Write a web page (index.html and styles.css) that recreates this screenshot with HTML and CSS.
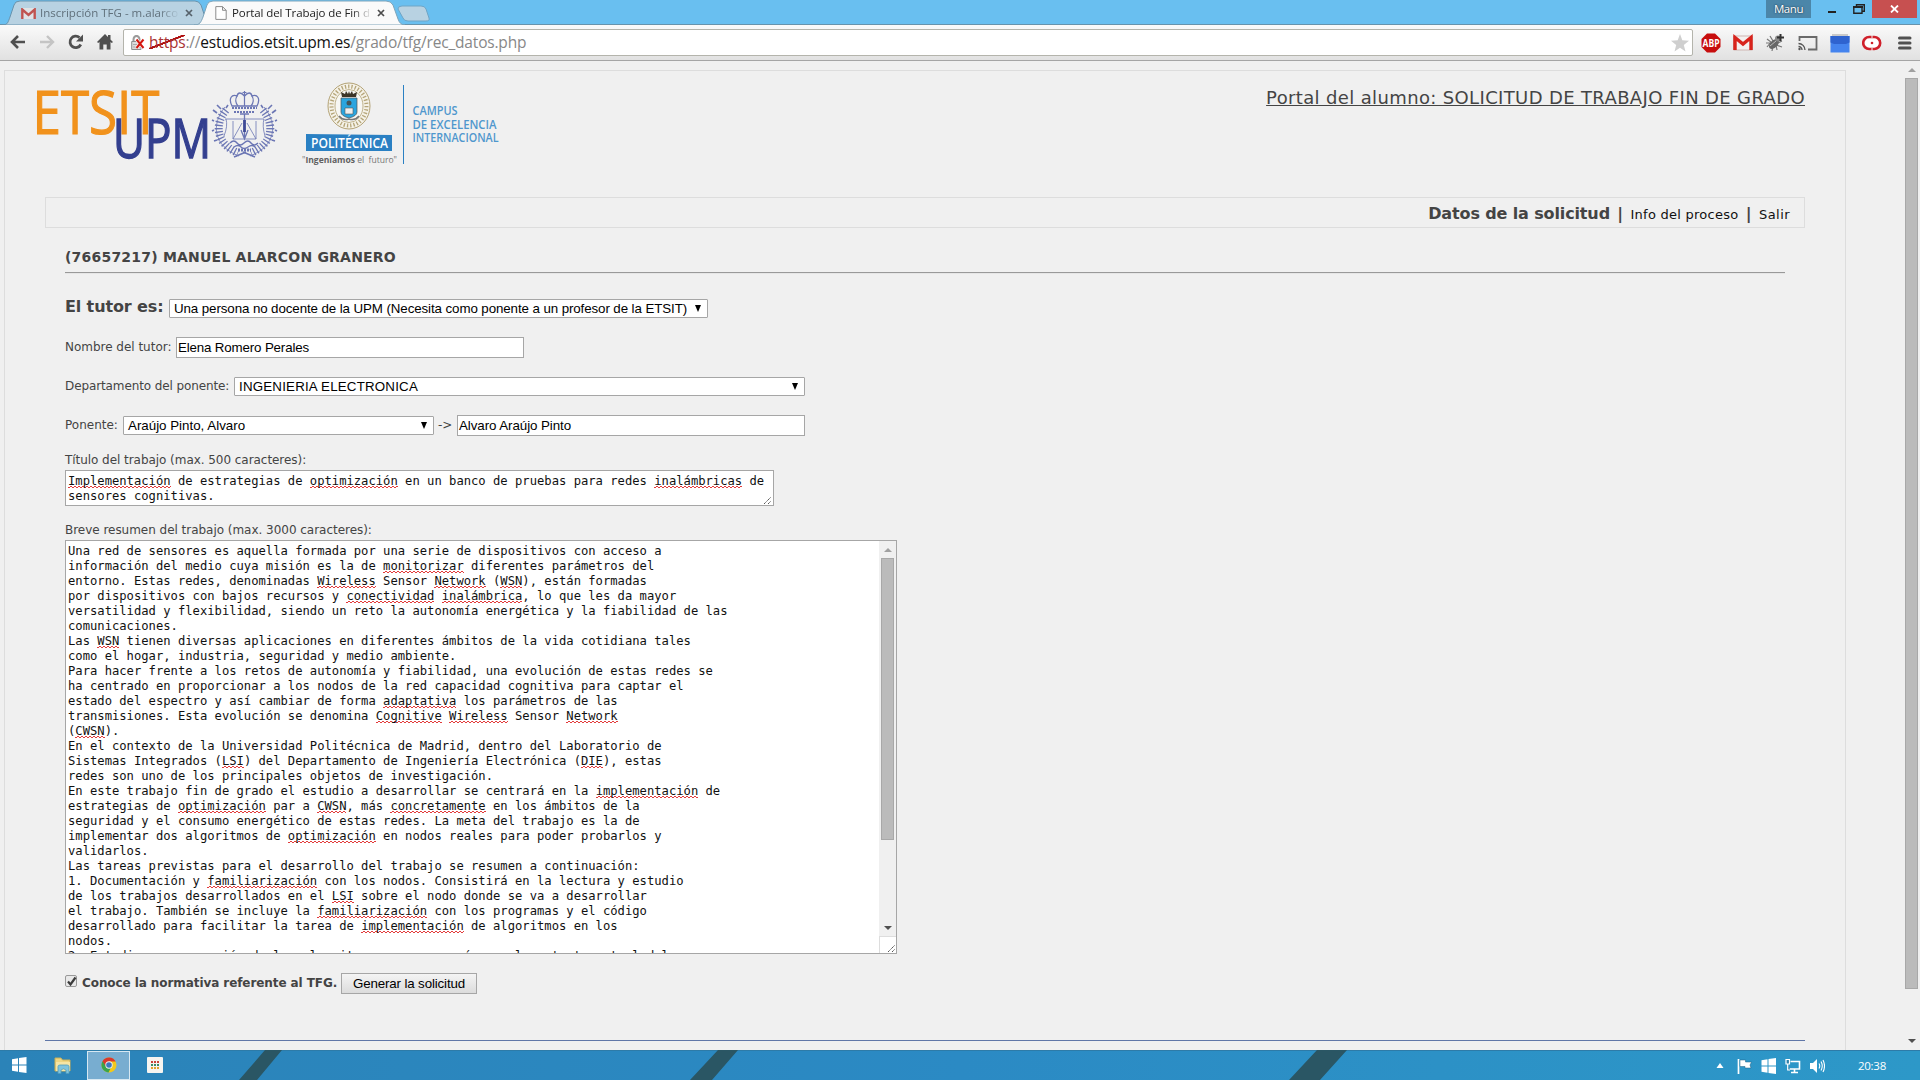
FILE: index.html
```html
<!DOCTYPE html>
<html lang="es">
<head>
<meta charset="utf-8">
<title>Portal del Trabajo de Fin de Grado</title>
<link rel="stylesheet" href="styles.css">
</head>
<body>
<header class="tabstrip">
  <svg class="tabshapes" width="440" height="25" viewBox="0 0 440 25">
    <path d="M2 25C8 25 8 22 10 17L14 5Q15 1 20 1H195Q199 1 201 5L206 20Q207 24 211 25Z" fill="#b8d2e2" stroke="#6893ad"/>
    <path d="M398 9Q398 6 402 6H421Q425 6 426 9L429 18Q430 21 426 21H408Q404 21 403 18Z" fill="#b8d2e2" stroke="#6fa5c6"/>
    <path d="M194 25C200 25 201 22 203 17L207 5Q208 1 213 1H386Q391 1 393 5L398 19Q400 25 405 25Z" fill="#fafafa" stroke="#7ea4ba"/>
  </svg>
  <div class="tab tab1">
    <svg width="15" height="11" viewBox="0 0 15 11"><path d="M0 0H15V11H0Z" fill="#dfe3e6"/><path d="M1.3 11V1.5L7.5 7L13.7 1.5V11" fill="none" stroke="#bf5451" stroke-width="2.4"/></svg>
    <span class="tabtitle">Inscripción TFG - m.alarco</span>
    <svg class="x" width="8" height="8" viewBox="0 0 8 8"><path d="M1 1L7 7M7 1L1 7" stroke="#56626b" stroke-width="1.7"/></svg>
  </div>
  <div class="tab tab2">
    <svg width="12" height="14" viewBox="0 0 12 14"><path d="M.8.6H7.5L11.2 4.3V13.4H.8ZM7.5.6V4.3H11.2" fill="#fff" stroke="#8c8c8c"/></svg>
    <span class="tabtitle">Portal del Trabajo de Fin d</span>
    <svg class="x" width="8" height="8" viewBox="0 0 8 8"><path d="M1 1L7 7M7 1L1 7" stroke="#4c4c4c" stroke-width="1.7"/></svg>
  </div>
  <div class="winctl">
    <span class="user">Manu</span>
    <svg width="61" height="18" viewBox="0 0 61 18"><path d="M17 11H25V13H17Z" fill="#222"/><path d="M42.8 7H51V13.2H42.8ZM45.5 7V4.7H53.3V11.3H51" fill="none" stroke="#222" stroke-width="1.4"/><path d="M42 6H52V8H42Z" fill="#222"/></svg>
    <span class="close"><svg width="9" height="8" viewBox="0 0 9 8"><path d="M1 .5L8 7.5M8 .5L1 7.5" stroke="#fff" stroke-width="1.8"/></svg></span>
  </div>
</header>
<nav class="toolbar">
  <div class="nav">
    <svg width="16" height="16" viewBox="0 0 16 16"><path d="M15 8H2M8 2L2 8L8 14" fill="none" stroke="#505050" stroke-width="2.6"/></svg>
    <svg width="16" height="16" viewBox="0 0 16 16"><path d="M1 8H14M8 2L14 8L8 14" fill="none" stroke="#c4c4c4" stroke-width="2.4"/></svg>
    <svg width="16" height="16" viewBox="0 0 16 16"><path d="M12.8 10.5A5.7 5.7 0 1 1 11.5 3.6" fill="none" stroke="#505050" stroke-width="2.8"/><path d="M15 .5V7.5H8Z" fill="#505050"/></svg>
    <svg width="16" height="16" viewBox="0 0 16 16"><path d="M8 0L11 3V1H13.5V5.4L16 8L14.8 9L13.5 8V15.5H9.7V10.5H6.3V15.5H2.5V8L1.2 9L0 8Z" fill="#505050"/></svg>
  </div>
  <div class="omnibox">
    <svg width="16" height="16" viewBox="0 0 16 16"><path d="M2.500 7V4.500A3 3.600 0 0 1 8.500 4.500V7" fill="none" stroke="#9b9b9b" stroke-width="2"/><path d="M.7 6.500H10V14.500H.7Z" fill="#dcdcdc" stroke="#8d8d8d"/><path d="M2 9.500H9M2 12H9" stroke="#aaa"/><path d="M5.500 4.500L12.500 13M12.500 4.500L5.500 13" stroke="#fff" stroke-width="3.400"/><path d="M5.500 4.500L12.500 13M12.500 4.500L5.500 13" stroke="#d3170f" stroke-width="2"/></svg>
    <span class="url"><span class="bad">https</span>://<span class="host">estudios.etsit.upm.es</span>/grado/tfg/rec_datos.php</span>
    <svg class="star" width="18" height="18" viewBox="0 0 18 18"><path d="M9 0L11.3 6.3L18 6.700L12.800 11L14.500 17.500L9 13.800L3.500 17.500L5.200 11L0 6.700L6.700 6.300Z" fill="#cfcfcf"/></svg>
  </div>
  <div class="ext">
    <svg width="20" height="20" viewBox="0 0 20 20"><path d="M6 .5H14L19.500 6V14L14 19.500H6L.5 14V6Z" fill="#c70d0d"/><text x="10" y="13.500" font-size="10" font-weight="700" text-anchor="middle" textLength="17" lengthAdjust="spacingAndGlyphs" fill="#fff">ABP</text></svg>
    <svg width="20" height="20" viewBox="0 0 20 20"><path d="M.5 3H19.500V17H.5Z" fill="#f4f0ef" stroke="#cfb5b2"/><path d="M2 17V4.500L10 11L18 4.500V17" fill="none" stroke="#d8231c" stroke-width="3.400"/></svg>
    <svg width="20" height="20" viewBox="0 0 20 20"><path d="M2 6L6 9L2 14M5 3L8 8M7 18L8 13M12 17L11 12L17 14M1 10H6M13 10L17 8" fill="none" stroke="#777" stroke-width="1.200"/><ellipse cx="9" cy="11" rx="3.600" ry="6" transform="rotate(45 9 11)" fill="#676767"/><path d="M5 13L11 8" stroke="#bbb"/><circle cx="13" cy="5.500" r="3" fill="#8a8a8a"/><path d="M15.500 1V8M12 4.500H19" stroke="#333" stroke-width="2"/></svg>
    <svg width="20" height="20" viewBox="0 0 20 20"><path d="M1.500 8V4H18.500V16.500H10" fill="none" stroke="#6a6a6a" stroke-width="1.800"/><path d="M.5 10.500A6.500 6.500 0 0 1 7 17M.5 13.500A3.500 3.500 0 0 1 4 17" fill="none" stroke="#555" stroke-width="1.300"/><circle cx="1.500" cy="16" r="1.200" fill="#555"/></svg>
    <svg width="20" height="20" viewBox="0 0 20 20"><path d="M2 1H18V4H2Z" fill="#c9c9c9"/><path d="M.5 3H19.500V19.500H.5Z" fill="#4584ee"/><path d="M.5 3H19.500V9.500L16 11H4L.5 9.500Z" fill="#2f63cf"/></svg>
    <svg width="20" height="20" viewBox="0 0 20 20"><rect x="1.200" y="4" width="17" height="12" rx="6" fill="#fff" stroke="#d0202b" stroke-width="2.600"/><path d="M10 2V5M10 15V18" stroke="#f0eeee" stroke-width="1"/><circle cx="10" cy="10" r="1.300" fill="#d0202b"/></svg>
    <svg width="20" height="20" viewBox="0 0 20 20"><path d="M5.500 5H16M5.500 10H16M5.500 15H16" stroke="#505050" stroke-width="3" stroke-linecap="round"/></svg>
  </div>
</nav>
<main class="viewport">
  <div class="frame">
    <div class="head">
      <svg class="logos" width="480" height="90" viewBox="30 76 480 90">
        <text class="etsit" x="32.500" y="134" textLength="127" lengthAdjust="spacingAndGlyphs" font-size="60.500">ETSIT</text>
        <text class="upm" x="113" y="157.500" textLength="98" lengthAdjust="spacingAndGlyphs" font-size="54.500">UPM</text>
        <g fill="none" stroke="#6b76b4">
          <path d="M226 110C214 124 216 144 238 153" stroke-width="8" stroke-dasharray="1.300 2"/>
          <path d="M263 110C275 124 273 144 251 153" stroke-width="8" stroke-dasharray="1.300 2"/>
          <path d="M225 107C211 124 213 146 239 156M264 107C278 124 276 146 250 156" stroke-width=".8"/>
          <path d="M217 113l-4 -3M221 109l-4 -4M226 108l2 -3M272 113l4 -3M268 109l4 -4M263 108l-2 -3M214 121l-2 -1M275 121l2 -1M214 130l-2 1M275 130l2 1M217 140l-3 1M272 140l3 1M234 157l12 -5M255 157l-12 -5" stroke-width="1.600"/>
          <path d="M232 106C228 98 232 94 237 96C238 92 241 92 244.500 96C248 92 251 92 252 96C257 94 261 98 257 106Z" stroke-width="1.300"/>
          <path d="M237 96Q234 101 238 106M252 96Q255 101 251 106M244.500 94V106M244.500 91V95M242.500 92.500H246.500" stroke-width="1.200"/>
          <path d="M232 108H257M234 112H255" stroke-width="2.200" stroke-dasharray="2 1"/>
          <path d="M225 119H264M233 121V139H256V121M233 139L242 123M256 139L247 123M226 119Q228 126 224 136M264 119Q262 126 265 136" stroke-width=".8"/>
          <path d="M240 114H249M244.500 114V139M241 130L244.500 139L248 130M230 143q4 -4 7 0t7 0t7 0t7 0M234 147q4 -3 7 0t7 0t7 0" stroke-width="1.300"/>
          <path d="M244.500 120V132" stroke="#3f4a97" stroke-width="2.800"/>
          <path d="M238 150H251" stroke-width="3" stroke-dasharray="2 1"/>
        </g>
        <ellipse cx="349" cy="106" rx="21" ry="23" fill="#f5f2e8" stroke="#b3a275"/>
        <ellipse cx="349" cy="106" rx="17.500" ry="19.500" fill="none" stroke="#b5a578" stroke-width="4" stroke-dasharray="1.300 2"/>
        <ellipse cx="349" cy="106" rx="14" ry="16.500" fill="#f7f7f3" stroke="#b3a275" stroke-width=".8"/>
        <path d="M342 97L341 92L345 94L346 91L348 94L349 91L350 94L352 91L353 94L357 92L356 97Z" fill="#3b3426"/>
        <path d="M341 98H357V112Q357 116 349 118Q341 116 341 112Z" fill="#2aa5df" stroke="#555" stroke-width=".7"/>
        <circle cx="349" cy="103" r="2.500" fill="#45555b"/><path d="M345 108H353V114H345Z" fill="#eee" stroke="#555" stroke-width=".6"/>
        <path d="M339 116Q343 121 349 119Q355 121 359 116" fill="none" stroke="#777" stroke-width="1.500"/>
        <path d="M306 134L392 135V151H306Z" fill="#2a80c3"/>
        <text class="pol" x="311" y="147.500" textLength="77" lengthAdjust="spacingAndGlyphs" font-size="15" fill="#fff">POLITÉCNICA</text>
        <text class="tag" x="302" y="163" textLength="95" lengthAdjust="spacingAndGlyphs" font-size="9.500" fill="#777"><tspan>"</tspan><tspan font-weight="700" fill="#606060">Ingeniamos</tspan> el&#160; futuro"</text>
        <path d="M403.500 85V164" stroke="#2a80c3"/>
        <g class="cei" fill="#4f97cd" font-size="12.500">
          <text x="412.500" y="115" textLength="45" lengthAdjust="spacingAndGlyphs">CAMPUS</text>
          <text x="412.500" y="129" textLength="84" lengthAdjust="spacingAndGlyphs">DE EXCELENCIA</text>
          <text x="412.500" y="142" textLength="86" lengthAdjust="spacingAndGlyphs">INTERNACIONAL</text>
        </g>
      </svg>
      <h1>Portal del alumno: SOLICITUD DE TRABAJO FIN DE GRADO</h1>
    </div>
    <div class="menubar">
      <b class="cur">Datos de la solicitud</b><b class="bar">|</b><span class="lnk">Info del proceso</span><b class="bar">|</b><span class="lnk out">Salir</span>
    </div>
    <section class="form">
      <h2>(76657217) MANUEL ALARCON GRANERO</h2>
      <hr>
      <div class="row r1"><b class="big">El tutor es:</b><span class="select s1"><span>Una persona no docente de la UPM (Necesita como ponente a un profesor de la ETSIT)</span><i></i></span></div>
      <div class="row r2"><span class="lb">Nombre del tutor:</span><span class="input tutor">Elena Romero Perales</span></div>
      <div class="row r3"><span class="lb">Departamento del ponente:</span><span class="select s3"><span>INGENIERIA ELECTRONICA</span><i></i></span></div>
      <div class="row r4"><span class="lb">Ponente:</span><span class="select s4"><span>Araújo Pinto, Alvaro</span><i></i></span><span class="lb arrow">-&gt;</span><span class="input">Alvaro Araújo Pinto</span></div>
      <div class="cap">Título del trabajo (max. 500 caracteres):</div>
      <div class="area a1"><pre><u>Implementación</u> de estrategias de <u>optimización</u> en un banco de pruebas para redes <u>inalámbricas</u> de
sensores cognitivas.</pre><svg class="grip" width="9" height="9" viewBox="0 0 9 9"><path d="M1 8L8 1M5 8L8 5" stroke="#555" stroke-dasharray="1.400 .5"/></svg></div>
      <div class="cap c2">Breve resumen del trabajo (max. 3000 caracteres):</div>
      <div class="area a2"><pre>Una red de sensores es aquella formada por una serie de dispositivos con acceso a
información del medio cuya misión es la de <u>monitorizar</u> diferentes parámetros del
entorno. Estas redes, denominadas <u>Wireless</u> Sensor <u>Network</u> (<u>WSN</u>), están formadas
por dispositivos con bajos recursos y <u>conectividad</u> <u>inalámbrica</u>, lo que les da mayor
versatilidad y flexibilidad, siendo un reto la autonomía energética y la fiabilidad de las
comunicaciones.
Las <u>WSN</u> tienen diversas aplicaciones en diferentes ámbitos de la vida cotidiana tales
como el hogar, industria, seguridad y medio ambiente.
Para hacer frente a los retos de autonomía y fiabilidad, una evolución de estas redes se
ha centrado en proporcionar a los nodos de la red capacidad cognitiva para captar el
estado del espectro y así cambiar de forma <u>adaptativa</u> los parámetros de las
transmisiones. Esta evolución se denomina <u>Cognitive</u> <u>Wireless</u> Sensor <u>Network</u>
(<u>CWSN</u>).
En el contexto de la Universidad Politécnica de Madrid, dentro del Laboratorio de
Sistemas Integrados (<u>LSI</u>) del Departamento de Ingeniería Electrónica (<u>DIE</u>), estas
redes son uno de los principales objetos de investigación.
En este trabajo fin de grado el estudio a desarrollar se centrará en la <u>implementación</u> de
estrategias de <u>optimización</u> par a <u>CWSN</u>, más <u>concretamente</u> en los ámbitos de la
seguridad y el consumo energético de estas redes. La meta del trabajo es la de
implementar dos algoritmos de <u>optimización</u> en nodos reales para poder probarlos y
validarlos.
Las tareas previstas para el desarrollo del trabajo se resumen a continuación:
1. Documentación y <u>familiarización</u> con los nodos. Consistirá en la lectura y estudio
de los trabajos desarrollados en el <u>LSI</u> sobre el nodo donde se va a desarrollar
el trabajo. También se incluye la <u>familiarización</u> con los programas y el código
desarrollado para facilitar la tarea de <u>implementación</u> de algoritmos en los
nodos.
2. Estudio y comparación de los algoritmos que se usarán en el contexto actual del</pre>
        <div class="sb"><i class="up"></i><i class="thumb"></i><i class="down"></i><div class="corner"><svg width="9" height="9" viewBox="0 0 9 9"><path d="M1 8L8 1M5 8L8 5" stroke="#555" stroke-dasharray="1.400 .5"/></svg></div></div>
      </div>
      <div class="row r5"><span class="check"><svg width="11" height="11" viewBox="0 0 11 11"><path d="M2 5.500L4.500 8.500L9.500 1.500" fill="none" stroke="#3c3c3c" stroke-width="2.200"/></svg></span><b class="agree">Conoce la normativa referente al TFG.</b><span class="btn">Generar la solicitud</span></div>
    </section>
    <div class="rule"></div>
  </div>
  <div class="mainsb"><i class="up"></i><i class="thumb"></i><i class="down"></i></div>
</main>
<footer class="taskbar">
  <svg class="streaks" width="1920" height="30" viewBox="0 0 1920 30"><path d="M265 0H282L257 30H239ZM718 0H738L712 30H690ZM1317 0H1347L1320 30H1289Z" fill="#2a5664"/></svg>
  <svg class="win" width="15" height="16" viewBox="0 0 15 16"><path d="M0 2.200L6 1.300V7.500H0ZM7 1.100L14.500 0V7.500H7ZM0 8.500H6V14.700L0 13.800ZM7 8.500H14.500V16L7 14.900Z" fill="#fff"/></svg>
  <svg class="exp" width="18" height="17" viewBox="0 0 18 17"><path d="M1 1H7L8.500 3H16V14H1Z" fill="#efd682" stroke="#c9ae57"/><path d="M2 5H16V14H2Z" fill="#f5e5a5"/><path d="M4 16.500V9.500Q4 8 6 8H13Q15 8 15 9.500V16.500H12V13Q9.500 10.500 7 13V16.500Z" fill="#7fc4de" stroke="#4e9cbd" stroke-width=".8"/></svg>
  <span class="active"><svg width="16" height="16" viewBox="0 0 16 16"><circle cx="8" cy="8" r="7.500" fill="#f2c81c"/><path d="M8 8L1.500 4.200A7.500 7.500 0 0 0 7.500 15.500L10.500 9.500Z" fill="#3aa44b"/><path d="M8 8V4.600H14.700A7.500 7.500 0 0 0 1.500 4.200L5 9.500Z" fill="#d9392d"/><circle cx="8" cy="8" r="3.700" fill="#eee"/><circle cx="8" cy="8" r="2.800" fill="#3d78bd"/></svg></span>
  <svg class="apps" width="16" height="16" viewBox="0 0 16 16"><rect width="16" height="16" rx="1" fill="#f6f4f0"/><path d="M4 5H12" stroke="#c9423a" stroke-width="2" stroke-dasharray="2 1"/><path d="M4 8H12" stroke="#3b8a6a" stroke-width="2" stroke-dasharray="2 1"/><path d="M4 11H12" stroke="#e0a32e" stroke-width="2" stroke-dasharray="2 1"/></svg>
  <div class="tray">
    <svg class="more" width="8" height="6" viewBox="0 0 8 6"><path d="M4 0L7.500 5H.5Z" fill="#fff"/></svg>
    <svg width="16" height="16" viewBox="0 0 16 16"><path d="M1.500 1V16" stroke="#fff" stroke-width="1.700"/><path d="M3 2H8.500V4H14.500L13 7L14 10H8V8.500H3Z" fill="#fff" stroke="#1d5f83" stroke-width=".5"/></svg>
    <svg width="16" height="16" viewBox="0 0 15 16"><path d="M0 2.200L6 1.300V7.500H0ZM7 1.100L14.500 0V7.500H7ZM0 8.500H6V14.700L0 13.800ZM7 8.500H14.500V16L7 14.900Z" fill="#fff"/></svg>
    <svg width="16" height="16" viewBox="0 0 16 16"><path d="M5.500 3.500H14.500V11H4.500M9.500 11V14.500M6 14.500H13" fill="none" stroke="#fff" stroke-width="1.600"/><path d="M1 1.500H4.500V6H1ZM2.700 6V12H5" fill="#2b80ac" stroke="#fff" stroke-width="1.200"/></svg>
    <svg width="16" height="16" viewBox="0 0 16 16"><path d="M1 5H4L8 1V15L4 11H1Z" fill="#fff"/><path d="M10 5.500Q11.500 8 10 10.500M12 3.500Q14.500 8 12 12.500M14 2Q17 8 14 14" fill="none" stroke="#fff" stroke-width="1.100"/></svg>
    <span class="clock">20:38</span>
  </div>
</footer>
</body>
</html>
```
FILE: styles.css
```css
* { box-sizing: border-box; }
body { margin: 0; width: 1920px; height: 1080px; overflow: hidden; background: #f0f0f0; display: flex; flex-direction: column; font-family: "DejaVu Sans", sans-serif; color: #444; }
svg { display: block; flex: none; }
i { font-style: normal; display: block; }
span, b { white-space: nowrap; }

.tabstrip { position: relative; height: 25px; background: #69bff0; display: flex; flex: none; font: 11.5px/16px "Open Sans", sans-serif; border-bottom: 1px solid #6793ac; }
.tabshapes { position: absolute; left: 0; top: 0; }
.tab { position: relative; display: flex; align-items: center; height: 26px; }
.tab1 { margin-left: 21px; width: 194px; color: #60707b; }
.tab2 { width: 192px; color: #222; }
.tabtitle { margin-left: 4px; width: 140px; overflow: hidden; mask-image: linear-gradient(90deg, #000 85%, transparent); }
.tab2 .tabtitle { margin-left: 5px; width: 140px; letter-spacing: -.09px; }
.tab .x { margin-left: 5px; }
.winctl { margin-left: auto; margin-right: 3px; display: flex; height: 18px; }
.user { width: 45px; background: #4b86a9; color: #fff; text-align: center; font-size: 11.5px; line-height: 17px; letter-spacing: -.4px; text-shadow: 0 0 2px #123; }
.close { width: 45px; background: #c75050; display: flex; align-items: center; justify-content: center; }

.toolbar { height: 36px; flex: none; display: flex; align-items: center; background: linear-gradient(#fafafa, #e1e1e1); border-bottom: 1px solid #a5a5a5; padding-left: 10px; }
.nav { display: flex; gap: 13px; width: 113px; }
.nav svg { margin-top: -1px; }
.omnibox { width: 1570px; height: 27px; border: 1px solid #b4b4ac; border-radius: 2px; background: #fff; display: flex; align-items: center; padding-left: 7px; }
.url { margin: -2px 0 0 2px; font: 15.5px/24px "Open Sans", sans-serif; letter-spacing: -.19px; color: #888; }
.url .bad { color: #a33; background: linear-gradient(to top left, transparent 46%, #b01010 47%, #b01010 54%, transparent 55%) 0 4px / 100% 14px no-repeat; }
.url .host { color: #111; }
.star { margin-left: auto; margin-right: 3px; }
.ext { display: flex; gap: 12.2px; margin-left: 8px; font-family: "Open Sans", sans-serif; }

.viewport { height: 989px; flex: none; display: flex; justify-content: space-between; overflow: hidden; }
.frame { margin: 9px 0 0 4px; width: 1842px; height: 990px; border: 1px solid #ddd; border-bottom: 0; display: flex; flex-direction: column; }
.head { height: 126px; display: flex; justify-content: space-between; padding: 5px 40px 0 25px; }
.logos { overflow: visible; }
h1 { margin: 10px 0 0; font-size: 18px; line-height: 24px; letter-spacing: .36px; font-weight: 400; text-decoration: underline; height: 24px; white-space: nowrap; }
.etsit { font-family: "Open Sans", sans-serif; fill: #f1921c; stroke: #f1921c; stroke-width: 1.2px; }
.upm { font-family: "Open Sans", sans-serif; fill: #333f8f; stroke: #333f8f; stroke-width: 1.4px; }
.pol, .tag, .cei { font-family: "Open Sans", sans-serif; }
.pol, .cei { font-weight: 600; }
.menubar { margin: 0 40px; height: 31px; border: 1px solid #ddd; display: flex; justify-content: flex-end; padding-right: 14px; line-height: 33px; font-size: 13px; }
.cur { font-size: 16px; line-height: 31px; letter-spacing: -.13px; }
.bar { font-size: 16px; line-height: 31px; width: 20.5px; text-align: center; }
.lnk { color: #111; letter-spacing: .26px; }
.out { letter-spacing: .44px; }
.form { margin: 0 60px; width: 1720px; }
h2 { margin: 19px 0 0; height: 25px; font-size: 14px; line-height: 21px; letter-spacing: .21px; }
hr { margin: 0 0 25px; height: 2px; border: 0; border-top: 1px solid #999; border-bottom: 1px solid #e6e6e6; }
.row { display: flex; align-items: flex-start; font-size: 12px; }
.r1 { height: 38px; }
.r2 { height: 40px; }
.r3 { height: 38px; }
.r4 { height: 37px; }
.big { width: 98px; font-size: 16px; line-height: 18px; letter-spacing: -.12px; margin: -1px 6px 0 0; }
.lb { line-height: 21px; margin-right: 5px; }
.r2 .lb { width: 106px; letter-spacing: -.02px; }
.r3 .lb { width: 164px; line-height: 18px; letter-spacing: -.11px; }
.r4 .lb { width: 53px; line-height: 20px; }
.select, .input, .btn { font: 13.333px/17px "Liberation Sans", sans-serif; color: #000; background: #fff; border: 1px solid #a6a6a6; display: flex; align-items: center; }
.select { height: 19px; padding: 0 6px 0 4px; justify-content: space-between; border-radius: 1px; }
.select i { border: 3.5px solid transparent; border-top: 7px solid #000; border-bottom: 0; margin-top: -1px; }
.s1 { width: 539px; letter-spacing: -.095px; }
.s3 { width: 571px; letter-spacing: .19px; }
.s4 { width: 311px; margin-top: 1px; }
.input { width: 348px; height: 21px; padding-left: 1px; letter-spacing: -.07px; }
.tutor { letter-spacing: -.155px; }
.r4 .arrow { margin: 0 5px 0 4px; width: 14px; }
.cap { font-size: 12px; line-height: 17px; height: 18px; letter-spacing: -.05px; }
.c2 { margin-top: 16px; letter-spacing: -.03px; }
.area { background: #fff; border: 1px solid #a6a6a6; position: relative; display: flex; overflow: hidden; }
.area pre { margin: 0; padding: 3px 2px 0; flex: 1; font: 12.18px/15px "DejaVu Sans Mono", monospace; color: #111; }
.area u { text-decoration: none; background: linear-gradient(90deg, #e23b3b 50%, transparent 50%) 0 100% / 4px 1px repeat-x, linear-gradient(90deg, transparent 50%, #e23b3b 50%) 0 calc(100% - 1px) / 4px 1px repeat-x; }
.a1 { width: 709px; height: 36px; }
.a2 { width: 832px; height: 414px; }
.grip { position: absolute; right: 1px; bottom: 0; }
.sb { width: 17px; background: #f0f0f0; display: flex; flex-direction: column; align-items: center; }
.up { border: 4px solid transparent; border-bottom: 4px solid #a0a0a0; border-top: 0; }
.down { border: 4px solid transparent; border-top: 4px solid #505050; border-bottom: 0; }
.thumb { width: 13px; background: #bbb; border: 1px solid #a8a8a8; }
.sb .up { margin: 7px 0 6px; }
.sb .thumb { height: 282px; flex: none; }
.sb .down { margin: 86px 0 6px; }
.corner { width: 17px; height: 17px; border: 1px solid #ddd; border-width: 1px 0 0 1px; background: #fff; padding: 7px 0 0 7px; }
.r5 { margin-top: 19px; }
.check { width: 12px; height: 12px; margin: 2px 5px 0 0; border: 1px solid #999; border-radius: 2px; background: #e9e9e9; }
.agree { width: 255px; font-size: 12px; line-height: 21px; letter-spacing: -.08px; margin-right: 4px; }
.btn { width: 136px; height: 21px; justify-content: center; letter-spacing: -.14px; background: linear-gradient(#f4f4f4, #dcdcdc); }
.rule { margin: 46px 40px 0; height: 1px; background: #6077a8; }
.mainsb { width: 17px; display: flex; flex-direction: column; align-items: center; }
.mainsb .up { margin: 7px 0 6px; }
.mainsb .thumb { height: 911px; }
.mainsb .down { margin-top: 50px; }

.taskbar { position: relative; height: 30px; flex: none; background: linear-gradient(90deg, #2b83b8, #2b8ac4 50%, #2d98c8); border-top: 1px solid #2d7ba8; display: flex; align-items: center; padding-left: 12px; }
.streaks { position: absolute; left: 0; top: 0; }
.taskbar > svg, .taskbar > span { margin-top: -1px; }
.exp { margin-left: 27px; }
.active { margin-left: 15px; width: 43px; height: 29px; background: #78add0; border: 1px solid #d7e8f2; display: flex; align-items: center; justify-content: center; }
.apps { margin-left: 17px; }
.tray { margin-left: auto; margin-right: 34px; display: flex; align-items: center; gap: 8px; font: 11.5px/16px "Open Sans", sans-serif; letter-spacing: -.26px; color: #fff; }
.more { margin-right: 5px; }
.clock { margin-left: 25px; }
```
